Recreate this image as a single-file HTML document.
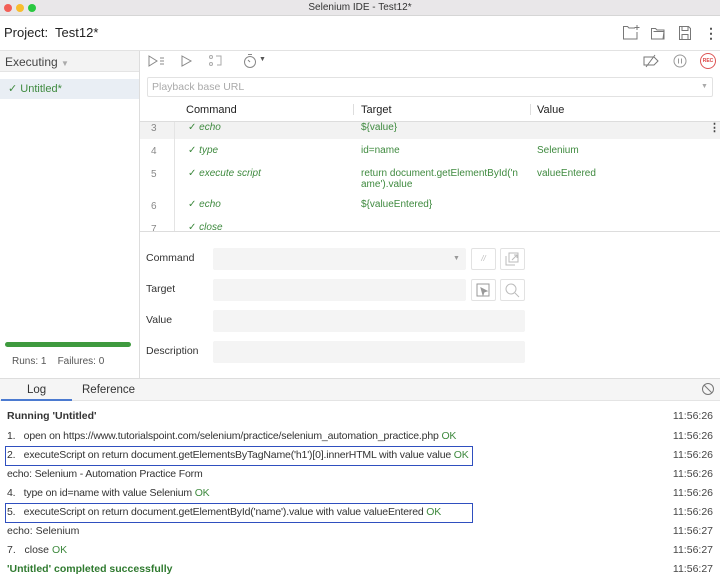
<!DOCTYPE html>
<html><head><meta charset="utf-8"><style>
*{box-sizing:border-box;margin:0;padding:0}
body{width:720px;height:577px;overflow:hidden;font-family:"Liberation Sans",sans-serif;background:#fff;position:relative;color:#333}
.a{position:absolute}
.g{color:#3f8a3f}
.i{font-style:italic}
.box{position:absolute;background:#f4f4f4;border-radius:2px}
.btn{position:absolute;border:1px solid #e2e2e2;border-radius:2px;width:25px;height:22px}
.log{position:absolute;left:7px;font-size:10.5px;color:#333}
.n{letter-spacing:-0.17px}
.t{position:absolute;right:7px;font-size:10.5px;color:#444}
svg{position:absolute}
</style></head><body>
<div class="a" style="left:0;top:0;width:720px;height:16px;background:#e9e7e9;border-bottom:1px solid #d6d6d6"></div>
<div class="a" style="left:4px;top:4px;width:8px;height:8px;border-radius:50%;background:#f25f57"></div>
<div class="a" style="left:16px;top:4px;width:8px;height:8px;border-radius:50%;background:#f8bd2e"></div>
<div class="a" style="left:28px;top:4px;width:8px;height:8px;border-radius:50%;background:#29c840"></div>
<div class="a" style="left:0;width:720px;top:2px;text-align:center;font-size:10px;color:#333">Selenium IDE - Test12*</div>
<div class="a" style="left:4px;top:25px;font-size:13px;color:#222">Project:&nbsp; Test12*</div>
<svg style="left:622px;top:24px" width="20" height="18" viewBox="0 0 20 18" fill="none" stroke="#777" stroke-width="1"><path d="M13 4H7L5.5 2.5H1.5V15H15V8"/><path d="M15 1v5M12.5 3.5h5"/></svg>
<svg style="left:650px;top:25px" width="16" height="16" viewBox="0 0 16 16" fill="none" stroke="#777"><path d="M1.5 3.5h4l1.5 1.5h7v9h-12.5z M3.5 6.5h10.5l-1 7.5"/></svg>
<svg style="left:678px;top:25px" width="14" height="16" viewBox="0 0 14 16" fill="none" stroke="#777"><path d="M1.5 1.5h9l2 2v11h-11z M4 1.5v4h6v-4 M4 14.5v-5h6v5"/></svg>
<div class="a" style="left:704px;top:25px;font-size:14px;font-weight:bold;color:#555">⋮</div>
<div class="a" style="left:0;top:50px;width:720px;height:1px;background:#e2e2e2"></div>
<div class="a" style="left:0;top:51px;width:139px;height:21px;background:#f3f3f3;border-bottom:1px solid #e4e4e4"></div>
<div class="a" style="left:5px;top:55px;font-size:12px;color:#444">Executing <span style="font-size:8px;color:#aaa">▼</span></div>
<div class="a" style="left:0;top:79px;width:139px;height:20px;background:#e9eef4"></div>
<div class="a" style="left:8px;top:82px;font-size:11px"><span class="g">✓ Untitled*</span></div>
<div class="a" style="left:139px;top:51px;width:1px;height:327px;background:#ddd"></div>
<div class="a" style="left:5px;top:342px;width:126px;height:5px;border-radius:3px;background:#3e9a3e"></div>
<div class="a" style="left:12px;top:356px;font-size:10px;color:#555">Runs: 1 &nbsp;&nbsp;&nbsp;Failures: 0</div>
<svg style="left:148px;top:55px" width="18" height="12" fill="none" stroke="#888"><path d="M1 1l8 5-8 5z M12 3h4M12 6h4M12 9h4"/></svg>
<svg style="left:181px;top:55px" width="12" height="12" fill="none" stroke="#888"><path d="M1 1l9 5-9 5z"/></svg>
<svg style="left:208px;top:54px" width="16" height="14" fill="none" stroke="#aaa"><circle cx="3" cy="3" r="1.5"/><circle cx="3" cy="10" r="1.5"/><path d="M8 2h5v9h-4"/></svg>
<svg style="left:243px;top:53px" width="14" height="16" fill="none" stroke="#888"><circle cx="7" cy="9" r="5.5"/><path d="M5 1.5h4M7 9l-2-2"/></svg>
<div class="a" style="left:259px;top:56px;font-size:7px;color:#555">▼</div>
<svg style="left:642px;top:54px" width="18" height="14" fill="none" stroke="#777"><path d="M2 3h10l4 4-4 4H2z M13 1L4 13"/></svg>
<svg style="left:673px;top:54px" width="14" height="14" fill="none" stroke="#999"><circle cx="7" cy="7" r="6"/><path d="M5.5 4.5v5M8.5 4.5v5"/></svg>
<div class="a" style="left:700px;top:53px;width:16px;height:16px;border:1px solid #d55;border-radius:50%;font-size:5px;color:#d44;text-align:center;line-height:14px;font-weight:bold">REC</div>
<div class="a" style="left:147px;top:77px;width:566px;height:20px;border:1px solid #e2e2e2;border-radius:2px"></div>
<div class="a" style="left:152px;top:81px;font-size:10.5px;color:#aaa">Playback base URL</div>
<div class="a" style="left:701px;top:83px;font-size:7px;color:#aaa">▼</div>
<div class="a" style="left:186px;top:104px;font-size:11px;color:#222">Command</div>
<div class="a" style="left:353px;top:104px;width:1px;height:11px;background:#ddd"></div>
<div class="a" style="left:361px;top:104px;font-size:11px;color:#222">Target</div>
<div class="a" style="left:530px;top:104px;width:1px;height:11px;background:#ddd"></div>
<div class="a" style="left:537px;top:104px;font-size:11px;color:#222">Value</div>
<div class="a" style="left:140px;top:121px;width:580px;height:1px;background:#ddd"></div>
<div class="a" style="left:140px;top:122px;width:580px;height:17px;background:#f2f2f2"></div>
<div class="a" style="left:174px;top:122px;width:1px;height:109px;background:#e4e4e4"></div>
<div class="a" style="left:709px;top:121px;font-size:11px;font-weight:bold;color:#444">⋮</div>
<div style="font-size:10px">
<div class="a" style="left:151px;top:123px;color:#888">3</div><div class="a g" style="left:188px;top:122px">✓ <i>echo</i></div><div class="a g" style="left:361px;top:122px">${value}</div>
<div class="a" style="left:151px;top:146px;color:#888">4</div><div class="a g" style="left:188px;top:145px">✓ <i>type</i></div><div class="a g" style="left:361px;top:145px">id=name</div><div class="a g" style="left:537px;top:145px">Selenium</div>
<div class="a" style="left:151px;top:169px;color:#888">5</div><div class="a g" style="left:188px;top:168px">✓ <i>execute script</i></div><div class="a g" style="left:361px;top:168px;line-height:11px">return document.getElementById('n<br>ame').value</div><div class="a g" style="left:537px;top:168px">valueEntered</div>
<div class="a" style="left:151px;top:201px;color:#888">6</div><div class="a g" style="left:188px;top:199px">✓ <i>echo</i></div><div class="a g" style="left:361px;top:199px">${valueEntered}</div>
<div class="a" style="left:151px;top:224px;color:#888;height:7px;overflow:hidden">7</div><div class="a g" style="left:188px;top:222px">✓ <i>close</i></div>
</div>
<div class="a" style="left:140px;top:231px;width:580px;height:1px;background:#ddd"></div>
<div class="a" style="left:146px;top:252px;font-size:10.5px">Command</div>
<div class="box" style="left:213px;top:248px;width:253px;height:22px"></div>
<div class="a" style="left:453px;top:255px;font-size:7px;color:#999">▼</div>
<div class="btn" style="left:471px;top:248px;font-size:8px;color:#bbb;text-align:center;line-height:20px"><i>//</i></div>
<div class="btn" style="left:500px;top:248px"></div>
<svg style="left:505px;top:252px" width="14" height="14" fill="none" stroke="#bbb"><path d="M1 4v9h9 M4 1h9v9H4z M7 8l5-5M9 3h3v3"/></svg>
<div class="a" style="left:146px;top:283px;font-size:10.5px">Target</div>
<div class="box" style="left:213px;top:279px;width:253px;height:22px"></div>
<div class="btn" style="left:471px;top:279px"></div>
<svg style="left:476px;top:283px" width="14" height="14" fill="none" stroke="#999"><path d="M1 1h12v12H1z"/><path d="M5 5l6 3-3 1-1 3z" fill="#999"/></svg>
<div class="btn" style="left:500px;top:279px"></div>
<svg style="left:504px;top:282px" width="16" height="16" fill="none" stroke="#bbb"><circle cx="7" cy="7" r="5"/><path d="M11 11l4 4"/></svg>
<div class="a" style="left:146px;top:314px;font-size:10.5px">Value</div>
<div class="box" style="left:213px;top:310px;width:312px;height:22px"></div>
<div class="a" style="left:146px;top:345px;font-size:10.5px">Description</div>
<div class="box" style="left:213px;top:341px;width:312px;height:22px"></div>
<div class="a" style="left:0;top:378px;width:720px;height:1px;background:#ddd"></div>
<div class="a" style="left:0;top:379px;width:720px;height:22px;background:#f5f5f5;border-bottom:1px solid #e4e4e4"></div>
<div class="a" style="left:27px;top:384px;font-size:11.5px;color:#333">Log</div>
<div class="a" style="left:1px;top:399px;width:71px;height:2px;background:#4b7ad0"></div>
<div class="a" style="left:82px;top:384px;font-size:11.5px;color:#333">Reference</div>
<svg style="left:701px;top:382px" width="14" height="14" fill="none" stroke="#777"><circle cx="7" cy="7" r="5.5"/><path d="M3 3l8 8"/></svg>
<div class="log" style="top:410px;font-weight:bold">Running 'Untitled'</div><div class="t" style="top:410px">11:56:26</div>
<div class="log n" style="top:430px">1.&nbsp;&nbsp; open on https://www.tutorialspoint.com/selenium/practice/selenium_automation_practice.php <span class="g">OK</span></div><div class="t" style="top:430px">11:56:26</div>
<div class="a" style="left:5px;top:446px;width:468px;height:20px;border:1.5px solid #2f4fbf"></div>
<div class="log n" style="top:449px">2.&nbsp;&nbsp; executeScript on return document.getElementsByTagName('h1')[0].innerHTML with value value <span class="g">OK</span></div><div class="t" style="top:449px">11:56:26</div>
<div class="log n" style="top:468px">echo: Selenium - Automation Practice Form</div><div class="t" style="top:468px">11:56:26</div>
<div class="log n" style="top:487px">4.&nbsp;&nbsp; type on id=name with value Selenium <span class="g">OK</span></div><div class="t" style="top:487px">11:56:26</div>
<div class="a" style="left:5px;top:503px;width:468px;height:20px;border:1.5px solid #2f4fbf"></div>
<div class="log n" style="top:506px">5.&nbsp;&nbsp; executeScript on return document.getElementById('name').value with value valueEntered <span class="g">OK</span></div><div class="t" style="top:506px">11:56:26</div>
<div class="log" style="top:525px">echo: Selenium</div><div class="t" style="top:525px">11:56:27</div>
<div class="log" style="top:544px">7.&nbsp;&nbsp; close <span class="g">OK</span></div><div class="t" style="top:544px">11:56:27</div>
<div class="log" style="top:563px;font-weight:bold;color:#2f7a2f">'Untitled' completed successfully</div><div class="t" style="top:563px">11:56:27</div>
</body></html>
